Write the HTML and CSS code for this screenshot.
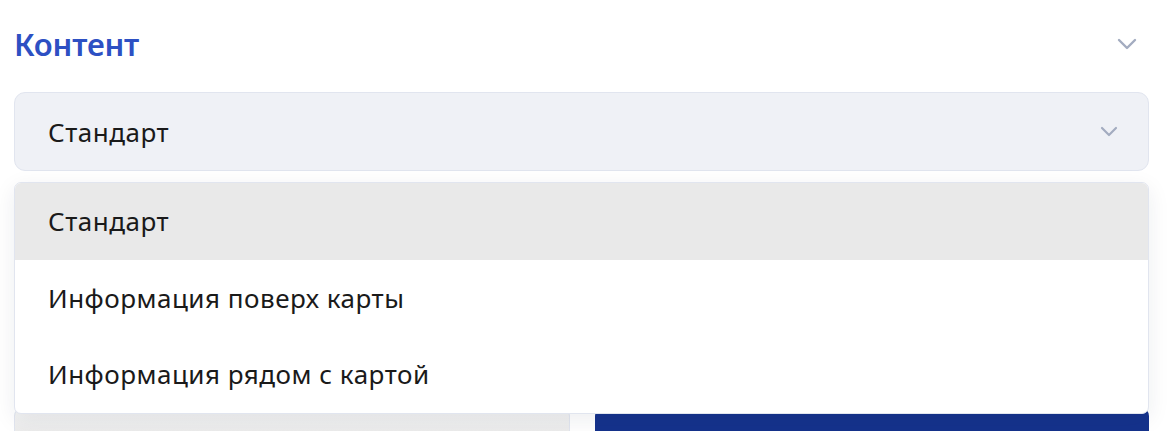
FILE: index.html
```html
<!DOCTYPE html>
<html lang="ru">
<head>
<meta charset="utf-8">
<link rel="stylesheet" href="styles.css">
</head>
<body>
<div class="panel">
  <div class="header">
    <h2 class="title">Контент</h2>
    <svg class="chev chev-lg" viewBox="0 0 20 12" width="20" height="12"><path d="M2 2 L10 10 L18 2" fill="none" stroke="#a3acc0" stroke-width="2.4" stroke-linecap="round" stroke-linejoin="round"/></svg>
  </div>
  <div class="select-wrap">
    <div class="select">
      <span class="value">Стандарт</span>
      <svg class="chev chev-sm" viewBox="0 0 18 11" width="18" height="11"><path d="M2 2 L9 9 L16 2" fill="none" stroke="#a3acc0" stroke-width="2.2" stroke-linecap="round" stroke-linejoin="round"/></svg>
    </div>
    <ul class="menu">
      <li class="opt active">Стандарт</li>
      <li class="opt">Информация поверх карты</li>
      <li class="opt">Информация рядом с картой</li>
    </ul>
  </div>
  <div class="spacer"></div>
  <div class="actions">
    <div class="btn btn-light"></div>
    <div class="btn btn-primary"></div>
  </div>
</div>
</body>
</html>
```
FILE: styles.css
```css
html, body {
  margin: 0;
  padding: 0;
  background: #ffffff;
}
body {
  font-family: "Noto Sans", "Open Sans", sans-serif;
  color: #1a1a1a;
}
.panel {
  width: 1135px;
  padding: 0 19px 0 14px;
}
.header {
  height: 92px;
  display: flex;
  align-items: flex-start;
  justify-content: space-between;
}
.title {
  margin: 24px 0 0 0;
  font-size: 31px;
  font-weight: 600;
  color: #2d50c3;
  letter-spacing: -0.2px;
  line-height: 40px;
}
.chev-lg {
  margin-top: 38px;
  margin-right: 12px;
}
.select-wrap {
  position: relative;
}
.select {
  height: 77px;
  box-sizing: content-box;
  border: 1.5px solid #e1e5ef;
  background: #eff1f6;
  border-radius: 11px;
  display: flex;
  align-items: center;
  justify-content: space-between;
  padding: 0 30px 0 33px;
}
.value {
  font-size: 26px;
  letter-spacing: 0.5px;
}
.menu {
  position: absolute;
  left: 0;
  right: 0;
  top: 90px;
  z-index: 10;
  list-style: none;
  margin: 0;
  padding: 0;
  background: #ffffff;
  border: 1.5px solid #e1e5ef;
  border-radius: 7px;
  overflow: hidden;
  box-shadow: 0 6px 22px rgba(30, 40, 70, 0.08);
}
.opt {
  height: 76.5px;
  display: flex;
  align-items: center;
  padding-left: 33px;
  font-size: 26px;
  letter-spacing: 0.5px;
  color: #1a1a1a;
}
.opt.active {
  background: #e9e9e9;
}
.spacer {
  height: 237px;
}
.actions {
  display: flex;
  gap: 25px;
}
.btn {
  flex: 1;
  height: 23px;
  border-radius: 8px 8px 0 0;
}
.btn-light {
  height: 21.5px;
  background: linear-gradient(#f4f4f4, #ececec);
  border: 1.5px solid #e1e5ef;
  border-bottom: none;
}
.btn-primary {
  background: #15328c;
}
```
